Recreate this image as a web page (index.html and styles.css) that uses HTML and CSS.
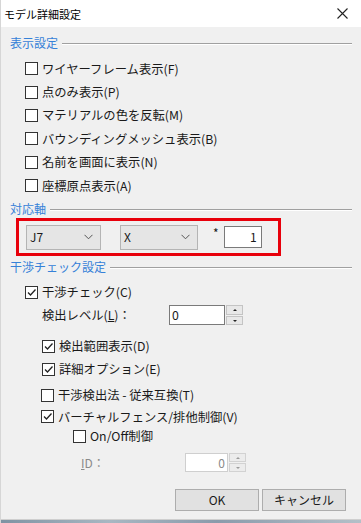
FILE: index.html
```html
<!DOCTYPE html>
<html lang="ja">
<head>
<meta charset="utf-8">
<link rel="stylesheet" href="styles.css">
</head>
<body>
<div class="win">
  <div class="titlebar">
    <span class="title">モデル詳細設定</span>
    <svg class="close" width="11" height="11" viewBox="0 0 11 11"><path d="M0.5 0.5 L10.5 10.5 M10.5 0.5 L0.5 10.5" stroke="#222" stroke-width="1.1" fill="none"/></svg>
  </div>
  <div class="client">
    <div class="sec">表示設定</div>
    <div class="list l1">
      <div class="cb"><span class="box"></span>ワイヤーフレーム表示(F)</div>
      <div class="cb"><span class="box"></span>点のみ表示(P)</div>
      <div class="cb"><span class="box"></span>マテリアルの色を反転(M)</div>
      <div class="cb"><span class="box"></span>バウンディングメッシュ表示(B)</div>
      <div class="cb"><span class="box"></span>名前を画面に表示(N)</div>
      <div class="cb"><span class="box"></span>座標原点表示(A)</div>
    </div>
    <div class="sec s2">対応軸</div>
    <div class="redbox">
      <div class="combo c1"><span>J7</span><svg width="9" height="6" viewBox="0 0 9 6"><path d="M0.5 0.8 L4.5 4.8 L8.5 0.8" stroke="#555" fill="none"/></svg></div>
      <div class="combo c2"><span>X</span><svg width="9" height="6" viewBox="0 0 9 6"><path d="M0.5 0.8 L4.5 4.8 L8.5 0.8" stroke="#555" fill="none"/></svg></div>
      <span class="star">*</span>
      <div class="num">1</div>
    </div>
    <div class="sec s3">干渉チェック設定</div>
    <div class="cb r1"><span class="box on"><svg width="11" height="11" viewBox="0 0 11 11"><path d="M2 5.5 L4.5 8 L9.5 2.5" stroke="#222" stroke-width="1.3" fill="none"/></svg></span>干渉チェック(C)</div>
    <div class="level">
      <span class="lbl">検出レベル(<u>L</u>)：</span>
      <div class="spin">
        <div class="sval">0</div>
        <div class="sbtns"><span class="sb"><i class="up"></i></span><span class="sb"><i class="dn"></i></span></div>
      </div>
    </div>
    <div class="cb r2"><span class="box on"><svg width="11" height="11" viewBox="0 0 11 11"><path d="M2 5.5 L4.5 8 L9.5 2.5" stroke="#222" stroke-width="1.3" fill="none"/></svg></span>検出範囲表示(D)</div>
    <div class="cb r3"><span class="box on"><svg width="11" height="11" viewBox="0 0 11 11"><path d="M2 5.5 L4.5 8 L9.5 2.5" stroke="#222" stroke-width="1.3" fill="none"/></svg></span>詳細オプション(E)</div>
    <div class="cb r4"><span class="box"></span>干渉検出法 - 従来互換(T)</div>
    <div class="cb r5"><span class="box on"><svg width="11" height="11" viewBox="0 0 11 11"><path d="M2 5.5 L4.5 8 L9.5 2.5" stroke="#222" stroke-width="1.3" fill="none"/></svg></span>バーチャルフェンス/排他制御(V)</div>
    <div class="cb r6"><span class="box"></span>On/Off制御</div>
    <div class="idrow">
      <span class="idl"><u>I</u>D：</span>
      <div class="spin dis">
        <div class="sval">0</div>
        <div class="sbtns"><span class="sb"><i class="up"></i></span><span class="sb"><i class="dn"></i></span></div>
      </div>
    </div>
    <div class="btns">
      <div class="btn">OK</div>
      <div class="btn">キャンセル</div>
    </div>
  </div>
  <div class="desk"></div>
</div>
</body>
</html>
```
FILE: styles.css
```css
* { box-sizing: border-box; }
html, body { margin: 0; padding: 0; }
body {
  width: 361px;
  height: 523px;
  overflow: hidden;
  background: #f0f0f0;
  font-family: "Noto Sans CJK JP", "Noto Sans", sans-serif;
  font-size: 12px;
  color: #1a1a1a;
}
.win { display: flex; flex-direction: column; height: 523px; border-left: 1px solid #d6d6d6; }
.titlebar {
  height: 27px;
  flex: none;
  background: #fff;
  display: flex;
  align-items: center;
  justify-content: space-between;
  padding: 0 13px 0 3px;
}
.title { font-size: 11px; color: #000; line-height: 14px; }
.client {
  height: 492px;
  flex: none;
  background: #f0f0f0;
  display: flex;
  flex-direction: column;
  padding: 8px 9px 0 9px;
}
.client > * { flex: none; }
.desk {
  flex: 1;
  border-top: 1px solid #cfcfcf;
  background: linear-gradient(90deg, #7f93a3, #a8b7c2 30%, #8a9bab 60%, #b4c0c8);
}
.sec {
  display: flex;
  align-items: center;
  gap: 4px;
  height: 16px;
  line-height: 16px;
  color: #3581d8;
  font-size: 12px;
}
.sec::after {
  content: "";
  flex: 1;
  height: 0;
  border-top: 1px solid #a0a0a0;
  border-bottom: 1px solid #ffffff;
  margin-top: 1px;
}
.list { display: flex; flex-direction: column; }
.l1 { margin-top: 6px; padding-left: 15px; }
.cb {
  display: flex;
  align-items: center;
  height: 23.4px;
  line-height: 14px;
  font-size: 12.3px;
  white-space: nowrap;
}
.box {
  width: 13px;
  height: 13px;
  border: 1px solid #333;
  background: #fff;
  margin-right: 4px;
  flex: none;
  display: flex;
  align-items: center;
  justify-content: center;
}
.s2 { margin-top: 4px; }
.redbox {
  margin-top: 1px;
  margin-left: 6px;
  width: 265px;
  height: 38px;
  border: 3px solid #e8000b;
  display: flex;
  align-items: center;
  padding-left: 7px;
}
.combo {
  height: 25px;
  background: #e5e5e5;
  border: 1px solid #b4b4b4;
  display: flex;
  align-items: center;
  justify-content: space-between;
  padding: 0 7px 0 3px;
}
.combo span { line-height: 14px; }
.c1 { width: 75px; }
.c2 { width: 78px; margin-left: 19px; }
.star { margin-left: 15px; align-self: flex-start; margin-top: 6px; font-size: 12px; line-height: 12px; }
.num {
  margin-left: 5px;
  width: 38px;
  height: 22px;
  background: #fff;
  border: 1px solid #7a7a7a;
  text-align: right;
  padding-right: 4px;
  line-height: 20px;
}
.s3 { margin-top: 3px; }
.r1 { margin-top: 6px; padding-left: 15px; height: 22px; }
.level { display: flex; align-items: center; height: 20px; margin-top: 2px; padding-left: 32px; font-size: 12.3px; }
.lbl { width: 127px; line-height: 14px; }
.spin { display: flex; align-items: stretch; height: 20px; }
.sval {
  width: 56px;
  background: #fff;
  border: 1px solid #7a7a7a;
  line-height: 18px;
  padding-left: 2px;
}
.sbtns { display: flex; flex-direction: column; gap: 1px; width: 17px; margin-left: 1px; }
.sb {
  flex: 1;
  background: #e8e8e8;
  border: 1px solid #c4c4c4;
  display: flex;
  align-items: center;
  justify-content: center;
}
.sb i { width: 0; height: 0; border-left: 2px solid transparent; border-right: 2px solid transparent; }
.sb i.up { border-bottom: 2px solid #222; }
.sb i.dn { border-top: 2px solid #222; }
.r2 { margin-top: 10px; padding-left: 32px; height: 22px; }
.r3 { padding-left: 32px; height: 24px; }
.r4 { margin-top: 3px; padding-left: 31px; height: 22px; }
.r5 { padding-left: 31px; height: 21px; }
.r6 { padding-left: 63px; height: 18px; }
.idrow { display: flex; align-items: center; margin-top: 8px; height: 19px; padding-left: 71px; }
.idl { width: 104px; color: #8a8a8a; line-height: 14px; }
.spin.dis { height: 19px; }
.dis .sval { width: 43px; border-color: #cfcfcf; color: #8a8a8a; text-align: right; padding-right: 2px; line-height: 17px; }
.dis .sb { border-color: #d2d2d2; background: #ececec; }
.dis .sb i.up { border-bottom-color: #9a9a9a; }
.dis .sb i.dn { border-top-color: #9a9a9a; }
.btns { display: flex; gap: 3px; margin-top: 17px; padding-left: 165px; }
.btn {
  width: 84px;
  height: 22px;
  background: #e1e1e1;
  border: 1px solid #adadad;
  text-align: center;
  line-height: 20px;
}
```
